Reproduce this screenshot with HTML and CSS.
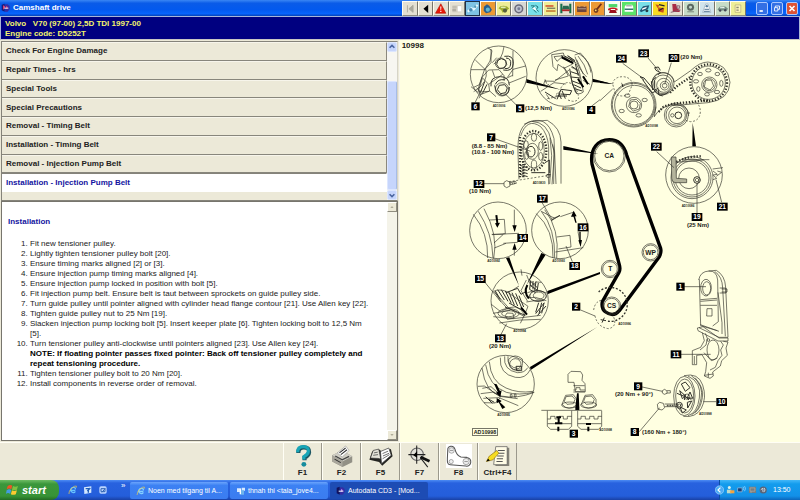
FILE: index.html
```html
<!DOCTYPE html>
<html lang="en">
<head>
<meta charset="utf-8">
<title>Camshaft drive</title>
<link rel="stylesheet" href="styles.css">
</head>
<body>
<header class="titlebar">
  <svg class="app-icon" viewBox="0 0 30 30"><path d="M2 5l9-3v24l-9-4z" fill="#181878"/><path d="M12 4h8l6 5v9l-6 8h-8z" fill="#342ca4"/><path d="M6 7l6 3v5l-6 5zM15 8l6 5-6 5z" fill="#d04078"/><path d="M10 14h12v3H10z" fill="#eef"/></svg>
  <h1>Camshaft drive</h1>
  <nav class="modules" aria-label="Modules">
    <button aria-label="First"><svg viewBox="0 0 46 42"><path d="M15 10v24M34 10L20 22l14 12z" fill="#aaa89c" stroke="#aaa89c" stroke-width="3"/></svg></button>
    <button aria-label="Back"><svg viewBox="0 0 46 42"><path d="M31 8L15 22l16 14z"/></svg></button>
    <button aria-label="Warnings"><svg viewBox="0 0 46 42"><path d="M23 5l17 32H5z" fill="#e81808" stroke="#b01000" stroke-width="2"/><path d="M21 14h4l-1 12h-2zM21 29h4v4h-4z" fill="#fff"/></svg></button>
    <button aria-label="Identification"><svg viewBox="0 0 46 42"><path d="M8 10h30v24H8z" fill="#d2cec2"/><path d="M26 13h12v18H26z" fill="#fff"/><path d="M8 14h14v4H8zm0 8h12v8H8z" fill="#b1ada2"/></svg></button>
    <button class="sky current" aria-label="Timing"><svg viewBox="0 0 46 42"><path d="M6 32l12-12 8 4 13-15" stroke="#e8f8ff" stroke-width="7" fill="none"/><circle cx="16" cy="25" r="6" fill="#4886b0"/><circle cx="31" cy="15" r="4" fill="#5898b8"/></svg></button>
    <button class="orange" aria-label="Engine"><svg viewBox="0 0 46 42"><path d="M10 15l10-8 8 5 9 13-6 9-14 3-8-8z" fill="#275d90"/><circle cx="23" cy="25" r="7" fill="#64b8d0"/></svg></button>
    <button class="lemon" aria-label="Car service"><svg viewBox="0 0 46 42"><path d="M5 20q8-12 29-6l7 7-5 4-17 10-5-9z" fill="#a1ae32"/><circle cx="27" cy="28" r="7" fill="#565f3c"/><path d="M15 14l15 1-2 5-16-1z" fill="#e1edb0"/></svg></button>
    <button class="pale" aria-label="Tyres"><svg viewBox="0 0 46 42"><circle cx="23" cy="22" r="13" fill="#c0c4d0" stroke="#6a6a7a" stroke-width="5"/><circle cx="23" cy="22" r="5" fill="#777d95"/></svg></button>
    <button class="cyan" aria-label="Cooling"><svg viewBox="0 0 46 42"><path d="M10 12h12l-8 8 14 15M25 10l9 6-6 8 8 7" stroke="#166770" stroke-width="3" fill="none"/><path d="M13 22l10-6 7 13z" fill="#fff"/></svg></button>
    <button class="lemon" aria-label="Lubricants"><svg viewBox="0 0 46 42"><path d="M5 10h27v5H5z" fill="#d04a2b"/><path d="M7 27h32v5H7z" fill="#c0702c"/><path d="M10 20h28" stroke="#444" stroke-width="3"/></svg></button>
    <button aria-label="Lifting points"><svg viewBox="0 0 46 42"><path d="M8 5v32M38 5v32" stroke="#176f49" stroke-width="7"/><path d="M14 12h18l4 12H10z" fill="#286950"/><path d="M10 24h26v6H10z" fill="#b12729"/></svg></button>
    <button class="orange" aria-label="Battery"><svg viewBox="0 0 46 42"><path d="M7 14h32v19H7z" fill="#6c453c"/><path d="M12 9h6v7h-6zm17 0h6v7h-6z" fill="#d89a54"/><path d="M9 22h28" stroke="#b8a798" stroke-width="3"/></svg></button>
    <button class="orange" aria-label="Service"><svg viewBox="0 0 46 42"><path d="M35 5L18 26" stroke="#722c1a" stroke-width="6"/><circle cx="17" cy="28" r="8" fill="#733e24"/><circle cx="16" cy="27" r="3" fill="#ffdf68"/></svg></button>
    <button class="white" aria-label="Diagnostics"><svg viewBox="0 0 46 42"><path d="M9 6h29v11H9z" fill="#4ed76b"/><path d="M7 22q16-8 32 0v5l-6 1-3-5H17l-3 5-7-1z" fill="#c71c27"/><path d="M14 26h18l5 10H10z" fill="#9a121d"/></svg></button>
    <button class="green" aria-label="Air conditioning"><svg viewBox="0 0 46 42"><path d="M9 15l5-7h20l4 7v17H9z" fill="#fff"/><path d="M9 21h29v5H9z" fill="#35746f"/><path d="M14 12h19" stroke="#333" stroke-width="2"/></svg></button>
    <button class="cyan" aria-label="Electrics"><svg viewBox="0 0 46 42"><path d="M6 29L17 13l21-3-4 13-24 11z" fill="#205875"/><path d="M15 20l15-5-3 6-14 5z" fill="#fff"/><circle cx="30" cy="29" r="5" fill="#253e46"/></svg></button>
    <button class="yellow" aria-label="Wiring"><svg viewBox="0 0 46 42"><path d="M8 7l13 3-5 10zM17 17l21 3-3 15-18-5z" fill="#c8501f"/><path d="M20 8l19 4M20 28l15-9" stroke="#22222a" stroke-width="4"/></svg></button>
    <button aria-label="Airbags"><svg viewBox="0 0 46 42"><path d="M11 6h13l4 16 8 3v8H13z" fill="#a92c45"/><path d="M6 34l33-8M27 12h9v8h-9z" stroke="#82586a" stroke-width="3" fill="none"/></svg></button>
    <button class="mint" aria-label="Brakes"><svg viewBox="0 0 46 42"><circle cx="22" cy="17" r="12" fill="#5a6860"/><circle cx="22" cy="17" r="5" fill="#c1d2c7"/><path d="M11 32h23" stroke="#889788" stroke-width="4"/></svg></button>
    <button class="ice" aria-label="Alignment"><svg viewBox="0 0 46 42"><path d="M19 6h8l10 28H9z" fill="#fff" stroke="#8aa1b0" stroke-width="2"/><circle cx="23" cy="13" r="4" fill="#537ca0"/><path d="M15 24h16M13 31h20" stroke="#728ea6" stroke-width="4"/></svg></button>
    <button class="mint" aria-label="Vehicles"><svg viewBox="0 0 46 42"><path d="M5 24l8-9 18-1 9 7-3 7H9z" fill="#728c81"/><path d="M14 17l13-1 4 4H13z" fill="#edf7f2"/><circle cx="14" cy="28" r="4" fill="#445"/><circle cx="31" cy="27" r="4" fill="#445"/></svg></button>
    <button class="lemon" aria-label="Notes"><svg viewBox="0 0 46 42"><path d="M14 9h19v25H14z" fill="#fff8bb" stroke="#aaa071" stroke-width="2"/><path d="M18 15h8v5h-8zm0 9h8v5h-8z" fill="#8b8872"/></svg></button>
  </nav>
  <div class="window-controls">
    <button aria-label="Minimize"><svg viewBox="0 0 12 12"><path d="M3 8h4v2H3z" fill="#fff"/></svg></button>
    <button aria-label="Restore"><svg viewBox="0 0 12 12"><path d="M4 5V3h5v4H7M3 5h4v4H3z" fill="none" stroke="#fff"/></svg></button>
    <button class="close" aria-label="Close"><svg viewBox="0 0 12 12"><path d="M3 3l6 6M9 3L3 9" stroke="#fff" stroke-width="2"/></svg></button>
  </div>
</header>
<section class="vehicle"><p>Volvo   V70 (97-00) 2,5D TDI 1997-00</p><p>Engine code: D5252T</p></section>

<main class="workspace">
  <div class="left">
    <section class="topics">
      <div class="topic-list">
        <button>Check For Engine Damage</button>
        <button>Repair Times - hrs</button>
        <button>Special Tools</button>
        <button>Special Precautions</button>
        <button>Removal - Timing Belt</button>
        <button>Installation - Timing Belt</button>
        <button>Removal - Injection Pump Belt</button>
        <button class="selected">Installation - Injection Pump Belt</button>
      </div>
      <div class="scroll blue">
        <button aria-label="Scroll up"><svg viewBox="0 0 10 10"><path d="M2 6l3-3 3 3" fill="none" stroke="#4a65a0" stroke-width="2"/></svg></button>
        <div class="track"><div class="thumb"></div></div>
        <button aria-label="Scroll down"><svg viewBox="0 0 10 10"><path d="M2 4l3 3 3-3" fill="none" stroke="#4a65a0" stroke-width="2"/></svg></button>
      </div>
    </section>
    <section class="procedure">
      <article>
        <h2>Installation</h2>
        <ol>
          <li>Fit new tensioner pulley.</li>
          <li>Lightly tighten tensioner pulley bolt [20].</li>
          <li>Ensure timing marks aligned [2] or [3].</li>
          <li>Ensure injection pump timing marks aligned [4].</li>
          <li>Ensure injection pump locked in position with bolt [5].</li>
          <li>Fit injection pump belt. Ensure belt is taut between sprockets on guide pulley side.</li>
          <li>Turn guide pulley until pointer aligned with cylinder head flange contour [21]. Use Allen key [22].</li>
          <li>Tighten guide pulley nut to 25 Nm [19].</li>
          <li>Slacken injection pump locking bolt [5]. Insert keeper plate [6]. Tighten locking bolt to 12,5 Nm<br>[5].</li>
          <li>Turn tensioner pulley anti-clockwise until pointers aligned [23]. Use Allen key [24].<br><b>NOTE: If floating pointer passes fixed pointer: Back off tensioner pulley completely and<br>repeat tensioning procedure.</b></li>
          <li>Tighten tensioner pulley bolt to 20 Nm [20].</li>
          <li>Install components in reverse order of removal.</li>
        </ol>
      </article>
      <div class="scroll grey">
        <button aria-label="Scroll up"><svg viewBox="0 0 10 10"><path d="M3 6l2-2 2 2z" fill="#999684"/></svg></button>
        <div class="track"></div>
        <button aria-label="Scroll down"><svg viewBox="0 0 10 10"><path d="M3 4l2 2 2-2z" fill="#999684"/></svg></button>
      </div>
    </section>
  </div>

  <figure class="diagram">
    <svg viewBox="0 0 1200 1206" preserveAspectRatio="xMinYMin meet" role="img" aria-label="Timing belt diagram 10998">
      <!-- upper left: pump locking details and sprocket -->
      <g transform="translate(0 -12)">
        <text class="fig-no" x="5" y="36">10998</text>
        <path class="solid" d="M379 129l104 32-104-21zM578 128l60 16-60-6zM490 330l85 19 20 5-105-13z"/>
        <circle cx="296" cy="115" r="85"/>
        <path d="M213 101h45q8 40-37 66M226 72l29 28 18-20V39M263 35l13 9-6 31-17 27-15 44-17 8M281 84q25-10 31-52M277 80l13-15M339 44l-1 77M377 90l-38 10-16 23M338 118l-28 13M246 124l20-22 31-1 15 18v12M246 124l20 21 3 20-28 11-6-19zM266 145l42-30M277 103l7 20M230 155l14 17-7 15M247 127l-12 39M213 152l20 16 35-2M377 121l-50 20M269 165l19 17"/>
        <path class="dense" d="M293 73l11-5 13 5 3 13-8 10-14 1-8-11zM313 61q28-5 27 21t-30 20M318 66q16 1 14 18t-18 13M273 151q-4-29 28-29 26 0 27 26M284 148q3 27 23 30 22-1 21-25M286 145q8-18 29-13M298 148l16-2 8 10-5 14-15 3-10-12zM254 137l-11 29M261 145l-14 28"/>
        <circle cx="302" cy="82" r="16"/><circle cx="306" cy="160" r="20"/>
        <path d="M226 198l18-36M314 172l36 36"/>
        <circle cx="493" cy="126" r="85"/>
        <path d="M455 56l35-5 4 13 20 5 4 15-26 13-18-12-3 19-12-12zM462 62l28-3-19 17zM490 92l15 28-40 12M434 135l30 1 43-34M440 143l-5-13M447 145l-8 4-8-4 4-12M524 57l17-6q28 27 32 59M534 60q22 26 29 55M525 62q12 40 35 61M505 60q27 16 34 51l11 57q-15 11-24 0l-14-45-20-29M514 94q19 5 25 28M422 166l40-26 35 4M530 71l20 44M449 190l-10-15M570 145l-21-12"/>
        <path class="dense" d="M483 59l38 23M494 60l32 19M502 59l23 15M526 83l9 36M509 98l8 46 13 29M515 91l20 13M512 107l24 8M514 123l27 3M517 135l24 9M521 146l22 10M523 158l24 7M467 180h34M476 170l8 19M486 164l10 24M471 190l12-30 32 4-5 12-29-2M435 168l32 20"/>
        <path class="thick" d="M485 64l34 17M549 121l15 24M534 128l16 26"/>
        <path class="dash" d="M482 157q14-25 32-14t22 43M468 175l17-12M504 192q25 10 32-6M442 188l40-8"/>
        <path d="M574 211l26-20"/>

        <path d="M354 353q-4-89 41-97 49 2 59 60l8 28-1 100M354 353l3 77M372 265q69-38 90 43l6 136M397 256l45-3q40 22 41 65v125M362 300q19-57 60-28 21 21 24 61v112M450 305l5 54-6 85M458 325l5 30-7 90"/>
        <ellipse cx="401" cy="344" rx="38" ry="59" class="teeth"/>
        <ellipse cx="401" cy="344" rx="32" ry="52"/><ellipse cx="397" cy="346" rx="18" ry="24"/><ellipse cx="393" cy="347" rx="12" ry="16" class="dense"/>
        <ellipse cx="402" cy="304" rx="8" ry="12"/><ellipse cx="378" cy="326" rx="7" ry="12"/><ellipse cx="422" cy="330" rx="6" ry="13"/><ellipse cx="380" cy="358" rx="6" ry="12"/><ellipse cx="422" cy="361" rx="6" ry="12"/><ellipse cx="402" cy="386" rx="8" ry="14"/>
        <path class="teeth" d="M360 303v125M370 375v51"/>
        <path class="dense" d="M360 388l23 7m-23 2l23 7m-23 2l23 7m-23 2l23 7M394 410h42M360 345l7-4M440 416h12M435 380l13-8v40"/>
        <circle cx="445" cy="420" r="5"/><path class="dash" d="M327 437l114-18"/>
        <path d="M284 308l108 38M252 443h60"/><path d="M312 439l8-5 9 4 1 12-10 5-8-5zM330 439l17-3 2 6-18 4zM335 437l3 8M341 436l3 8"/>
        <path d="M424 496l33 56M452 498"/>
      </g>
      <!-- injection pump belt and guide pulley -->
      <g transform="translate(600 -12)">
        <path class="solid" d="M0 135l39 9-39-3zM278 260l-1 71h11zM64 139l7 12-4 2z"/>
        <path class="dash" d="M38 144q3-22 32-22 27 3 26 26l-10 25q-18 14-40 0z"/>
        <path d="M0 194l38-35M68 82l57 42M144 66l32 38M214 80l-20 65"/>
        <circle cx="101" cy="206" r="67"/><circle cx="103" cy="207" r="59"/><circle cx="101" cy="206" r="64"/>
        <circle cx="102" cy="207" r="23"/><path d="M91 192l18-2 12 12-3 17-18 6-14-13z"/><circle cx="102" cy="207" r="12"/>
        <ellipse cx="82" cy="179" rx="8" ry="5"/><ellipse cx="134" cy="192" rx="8" ry="5"/><ellipse cx="65" cy="225" rx="8" ry="5"/><ellipse cx="116" cy="238" rx="8" ry="5"/>
        <circle cx="189" cy="143" r="33"/><circle cx="189" cy="145" r="28"/><circle cx="191" cy="148" r="21"/><circle cx="194" cy="149" r="13"/><circle cx="194" cy="149" r="7"/>
        <path class="dense" d="M160 158q17 34 46 10M168 124l-14 13 4 25M174 116l8-6-14-7-4-8 11-2 6 10M164 133v24M120 122l12 4 31 37 13-7M128 131l28 40 16-8M120 122l12 11M176 160v16l12 4"/>
        <path d="M155 143q5-38 40-33 24 5 28 28l49-34q27-26 52-26 60 3 66 61-2 53-66 61l-107 9M168 212l-5 30"/>
        <path class="teeth" d="M176 228l15-16 27-9 108-10M210 170l24-22 36-24"/>
        <circle cx="326" cy="140" r="50"/><circle cx="326" cy="140" r="55" class="teeth"/><circle cx="328" cy="146" r="23"/><circle cx="328" cy="146" r="18"/><path d="M317 133l17-1 7 18-11 12-17-9z"/>
        <ellipse cx="325" cy="103" rx="8" ry="5"/><ellipse cx="352" cy="114" rx="7" ry="5"/><ellipse cx="364" cy="142" rx="5" ry="9"/><ellipse cx="351" cy="168" rx="8" ry="5"/><ellipse cx="321" cy="175" rx="7" ry="5"/><ellipse cx="295" cy="159" rx="5" ry="7"/><ellipse cx="288" cy="136" rx="8" ry="5"/><ellipse cx="300" cy="114" rx="7" ry="5"/>
        <circle cx="229" cy="237" r="36"/><circle cx="229" cy="237" r="31"/><circle cx="231" cy="238" r="25"/><circle cx="235" cy="238" r="10" class="dense"/><circle cx="217" cy="238" r="5"/><path d="M162 243q20-36 66-38 38 3 38 35M261 231h9"/>
        <path class="dash" d="M256 204l33-6q12 12 12 30-2 28-30 29l-19-5"/>

        <circle cx="282" cy="417" r="85"/><circle cx="276" cy="425" r="63"/><circle cx="276" cy="426" r="57"/><circle cx="276" cy="426" r="51"/>
        <circle cx="267" cy="427" r="31"/><circle cx="291" cy="432" r="10" class="dense"/><circle cx="291" cy="432" r="5"/>
        <path class="key" d="M214 363h14l1 64 31 2v11h-35q-10-2-10-13z"/>
        <path d="M229 379l82-7M250 371h78M338 399l31-4M339 405l13 10-13 2M352 405l13 4-16 12M340 418l10 9-11 4"/>
        <path class="teeth" d="M229 378q39-19 76-17"/>
        <path d="M170 347l52 48M348 431l17 68M291 442v89"/>
      </g>
      <!-- timing belt run -->
      <path class="belt" d="M576 372C569 326 594 299 628 299 657 299 673 319 680 345L782 625Q785 637 778 650L658 812Q640 833 617 816 603 806 607 785L657 697Q662 688 658 674L605 478Z"/>
      <circle cx="628" cy="348" r="48"/><circle cx="628" cy="348" r="44"/>
      <circle cx="752" cy="637" r="26"/><circle cx="752" cy="637" r="22"/>
      <circle cx="630" cy="687" r="26"/><circle cx="630" cy="687" r="22"/>
      <circle cx="635" cy="798" r="27"/><circle cx="635" cy="798" r="23"/>
      <path class="dash heavy" d="M596 756a51 51 0 1 1 24 87"/><path class="dash" d="M581 810q4-28 28-30M585 827q7 35 41 39 26-6 15-35"/><path class="dense" d="M602 839l16 3M613 833l-7 15"/>
      <g class="pulley"><text x="628" y="355">CA</text><text x="752" y="644">WP</text><text x="631" y="694">T</text><text x="635" y="805">CS</text></g>

      <!-- timing mark magnifications -->
      <g transform="translate(0 570)">
        <path class="solid" d="M318 84l10-2 29 85zM380 165l57-91-13-5zM442 183l158-57v6l-158 61zM390 411l202-120-200 129z"/>
        <circle cx="294" cy="1" r="85"/><path d="M235-56q42 65 44 140M252-64q44 80 29 150M220-47q45 56 43 131M268-30l45-2 3 43-40 3M275 13l35 0-28 26M310 12l47-2M310 40l43-3M318 40l-35 14M343-61v50M343 77V50"/><path class="solid" d="M337-14h13l-6 20zM337 59h13l-6-20zM286-44l6-1 3 24 5-1-8 15-7-13 4-1z"/>
        <circle cx="480" cy="1" r="85"/><path d="M424-56l38 20 18-7M453-28l27-16-25 15 7-9M434-61q46 59 36 146M409-49q53 47 50 133M424-56q42 51 40 140M481-40l41-14M470 21l40-5 3 35-38 6M466 66l84-13M522-51v9M534 5l8 44"/><path class="solid" d="M513-40l8-18 9 17zM535 31l11-1-4 20zM519-45h5l6 23h-4zM538 5h4v30h-4z"/>
        <path d="M366 137l-3-19M498 48l19 47M254 156l49 60M302 315l18-34"/>
        <circle cx="359" cy="212" r="86"/>
        <path d="M281 184q14-8 38 0l65 45-12 30-45-24-15-17zM286 187l12 22 26 29M274 223l28 22q50-33 72 9l-13 26M279 250l51-9M280 260l60 6 82-10M298 279q60-12 124-11M380 135l13 33 16-12 15 1M379 150l-16 32 20 32M357 168l-19 12M380 204l26-2 33 10M382 188l30-8 28 9M379 216q24-6 54-4"/>
        <path class="dense" d="M286 183l15 25m-8-29l20 31m-9-31l20 35m-8-31l18 37m-8-35l17 40m-7-37l17 40m-6-38l17 41m-7-34l14 34M315 231l61 25M327 219l50 27M389 151l23 22m-22-7l21 14m-23-2l19 10M392 152l-3 25m10-24v25m9-24l-4 27m11-22l-4 26M407 251l26-33m-21 39l26-29m-22-10l-9 29m18-29l-8 33m15-32l-7 31M318 188l35-13 10 18 18-10"/>
        <path class="thick" d="M382 165q-12 23 5 40M363 232l18 22"/>
        <ellipse cx="326" cy="250" rx="32" ry="14"/><ellipse cx="326" cy="251" rx="21" ry="9"/><path d="M316 257l5-8 18 1 3 15-20 3z"/><ellipse cx="414" cy="198" rx="25" ry="16" class="dense"/><ellipse cx="416" cy="197" rx="16" ry="11"/>
        <circle cx="317" cy="462" r="86"/>
        <path d="M246 414q10 74 57 84t100-11M257 404q9 64 62 83 38 10 82 0M268 395q4 60 50 79 37 17 81 10M234 469l19-1 46 31 54 7M242 491l40-5 17 13M250 505l47-2 58 24M252 518l34 1 15-16M247 475l26-5 28 25M301 383q-4 49 45 59 31 5 44-22M314 379q-5 41 38 49 22 1 31-15M324 379q-5 33 32 37M326 388q18-20 41-1 3 30-12 35-33-5-29-34z"/>
        <circle cx="346" cy="403" r="17"/><path class="dense" d="M348 409h17v13h-15zM267 508l16 9M257 500l20 20"/>
        <path class="solid" d="M282 461l8 2 10 20 5-2-4 20-13-13 5-3zM316 532l-9 5-11-20-6 3v-16l15 9-5 4z"/>
        <path d="M331 493h5v9h-5zM343 492h5v9h-5z"/>
        <rect x="217" y="596" width="76" height="20"/><text class="plate" x="255" y="612">AD10998</text>

        <path d="M504 433l9-9 29 1 6 10-2 16 9 10 1 24h-30l-4-28H504z"/><path d="M520 467h34M520 480h8v-7h12v7h15M520 486h35"/>
        <path d="M486 523l11-27 23-2 10 14v17q-25 20-44-2zM544 523l11-27 23-2 10 14v17q-25 20-44-2z"/><ellipse cx="509" cy="525" rx="24" ry="9"/><ellipse cx="566" cy="525" rx="24" ry="9"/><path d="M493 514l5-14 18-2 9 10-5 13-19 2zM551 514l5-14 18-2 9 10-5 13-19 2z"/>
        <path class="solid" d="M531 490h5l2 42v8h-12v-8z"/>
        <path d="M424 541h181M442 542v47l10 9h53l10-9v-47M533 542v47l10 9h52l10-9v-47M442 567h10v-8h13v8h12v-8h13v8h12v-8h13M443 581h71M533 567h10v-8h13v8h13v-8h13v8h12v-8h11M533 581h71"/>
        <path class="thick" d="M476 562v18M469 562h14M465 580h22M475 590v14M565 590v14M558 582h15"/>
        <path d="M542 240l43 18"/>
      </g>
      <!-- covers, crankshaft pulley and bolts -->
      <g transform="translate(600 570)">
        <path d="M296 150q5-26 31-27 23-1 26 27l2 125-17 13M298 148l4 139 50 15M301 284l56 20M326 123l23-2q26 15 28 51l7 150h-27l-60-29M344 124q23 16 24 50l8 145M359 174h19v15h-19M365 177h16v9h-16M354 187l12 91v34M301 209l50-4M301 226h50M321 236h15v22h-16zM301 214l50-4M292 294l17-4 48 34h27v9h-30l-60-31z"/>
        <path d="M307 308L313 332 302 352 277 362V404H290V376L306 374 320 398 317 425 313 438 330 445 340 438 338 426 361 408 365 392 382 376 378 354 384 336 370 334M316 310L322 325 318 345 300 360M362 334L370 345 362 360 366 376 354 392 346 412 330 420M283 378v24M312 368l22 24 18-8M313 436l27-4M325 428v14"/>
        <ellipse cx="318" cy="173" rx="16" ry="25"/><ellipse cx="320" cy="175" rx="12" ry="20"/><ellipse cx="339" cy="360" rx="18" ry="30"/><circle cx="325" cy="330" r="4"/>
        <path d="M251 170h67M242 373h90M310 515h38M122 470l65 14M118 605l61-72"/>
        <ellipse cx="253" cy="498" rx="32" ry="59"/><ellipse cx="254" cy="498" rx="27" ry="51"/><path d="M252 437q43-10 56 28t-4 70q-17 29-54 24M264 438q42 20 34 66-6 45-34 53M274 437q39 28 29 69-6 37-28 48M285 443q28 31 22 60-5 33-22 45"/>
        <path class="dense" d="M244 462l12-6 14 17-14 11zM239 482l18 16-10 8zM270 486l8 19-16-2zM262 517l13-4-12 21zM240 531l19 9-12 9zM231 490l43 18M250 494l17 16M256 493l-3 17M240 529l4-6"/><circle cx="261" cy="500" r="8"/><circle cx="238" cy="526" r="9" class="dense"/><circle cx="238" cy="526" r="4"/>
        <path d="M187 482l7-4 7 5v7l-8 3-6-4zM201 482h10v7h-10M172 523l7-6 11 3 4 13-8 7-12-3zM194 522h38v8h-38"/><path class="dense" d="M202 524v5m5-5v5m5-5v5m5-5v5m5-5v5"/>
      </g>
      <g class="tag">
        <rect x="214" y="187" width="25" height="24"/><text x="226" y="206">6</text>
        <rect x="348" y="193" width="25" height="24"/><text x="360" y="212">5</text>
        <rect x="561" y="198" width="25" height="24"/><text x="573" y="217">4</text>
        <rect x="261" y="280" width="25" height="24"/><text x="273" y="299">7</text>
        <rect x="221" y="420" width="32" height="24"/><text x="237" y="439">12</text>
        <rect x="411" y="464" width="32" height="24"/><text x="427" y="483">17</text>
        <rect x="533" y="550" width="32" height="24"/><text x="549" y="569">16</text>
        <rect x="352" y="582" width="32" height="24"/><text x="368" y="601">14</text>
        <rect x="508" y="666" width="32" height="24"/><text x="524" y="685">18</text>
        <rect x="225" y="705" width="32" height="24"/><text x="241" y="724">15</text>
        <rect x="516" y="788" width="25" height="24"/><text x="528" y="807">2</text>
        <rect x="285" y="883" width="32" height="24"/><text x="301" y="902">13</text>
        <rect x="509" y="1169" width="25" height="24"/><text x="521" y="1188">3</text>
        <rect x="648" y="44" width="32" height="24"/><text x="664" y="63">24</text>
        <rect x="715" y="28" width="32" height="24"/><text x="731" y="47">23</text>
        <rect x="806" y="42" width="32" height="24"/><text x="822" y="61">20</text>
        <rect x="753" y="308" width="32" height="24"/><text x="769" y="327">22</text>
        <rect x="951" y="488" width="32" height="24"/><text x="967" y="507">21</text>
        <rect x="875" y="519" width="32" height="24"/><text x="891" y="538">19</text>
        <rect x="829" y="728" width="25" height="24"/><text x="841" y="747">1</text>
        <rect x="812" y="931" width="32" height="24"/><text x="828" y="950">11</text>
        <rect x="702" y="1027" width="25" height="24"/><text x="714" y="1046">9</text>
        <rect x="949" y="1074" width="32" height="24"/><text x="965" y="1093">10</text>
        <rect x="692" y="1164" width="25" height="24"/><text x="704" y="1183">8</text>
      </g>
      <g class="torque">
        <text x="375" y="210">(12,5 Nm)</text><text x="215" y="323">(8.8 - 85 Nm)</text><text x="215" y="342">(10.8 - 100 Nm)</text><text x="207" y="460">(10 Nm)</text>
        <text x="841" y="57">(20 Nm)</text><text x="861" y="561">(25 Nm)</text><text x="267" y="924">(20 Nm)</text><text x="645" y="1068">(20 Nm + 90°)</text><text x="726" y="1183">(160 Nm + 180°)</text>
      </g>
      <g class="note">
        <text x="278" y="200">AD10006</text><text x="486" y="211">AD10086</text><text x="398" y="432">AD10830</text><text x="736" y="260">AD10098</text><text x="845" y="500">AD10086</text><text x="262" y="667">AD10992</text><text x="457" y="667">AD10993</text><text x="340" y="877">AD10994</text><text x="292" y="1129">AD10995</text><text x="655" y="856">AD10996</text><text x="897" y="1126">AD10998</text><text x="598" y="1172">AD10998</text>
      </g>
    </svg>
  </figure>
</main>

<nav class="actions" aria-label="Actions">
  <button><svg viewBox="0 0 75 66"><path d="M24 24q0-16 16-16t15 14q-1 10-13 15v8" fill="none" stroke="#1c5562" stroke-width="12"/><path d="M22 22q0-16 16-16t15 14q-1 9-13 15v8" fill="none" stroke="#18a5b7" stroke-width="9"/><circle cx="40" cy="57" r="7" fill="#168c9e"/></svg>F1</button>
  <button><svg viewBox="0 0 75 66"><path d="M9 31l29-14 29 17v17L39 65 9 49z" fill="#929086"/><path d="M9 31l29-14 29 17-28 15z" fill="#d0cec5"/><path d="M9 31l30 18v15L9 49z" fill="#aaa79d"/><path d="M24 24l24-20 10 13-20 19z" fill="#fff" stroke="#555"/><path d="M30 24l18-14M34 29l18-14M16 42l18 10" stroke="#333" stroke-width="3"/><path d="M18 33l20 11 20-10" fill="none" stroke="#444" stroke-width="4"/></svg>F2</button>
  <button><svg viewBox="0 0 75 66"><path d="M4 44l8-24 20-6 9 7 25-8 5 21-30 27-9-11z" fill="#252522"/><path d="M7 39l8-22 16-4 6 29-8-2z" fill="#e5e4da" stroke="#333" stroke-width="2"/><path d="M36 20l24-10 7 21-28 24z" fill="#fff" stroke="#333" stroke-width="2"/><path d="M17 24l11-2m-13 9l14-2M42 26l16-7M43 33l18-8M42 41l20-12" stroke="#333" stroke-width="2"/></svg>F5</button>
  <button><svg viewBox="0 0 75 66"><circle cx="29" cy="28" r="18" fill="#ddd" fill-opacity=".6" stroke="#666" stroke-width="3"/><path d="M28 3v52M4 29h49M38 37l22 28" stroke="#222" stroke-width="3"/><path d="M39 36l26 12" stroke="#111" stroke-width="8"/><path d="M18 31l11-12v19z"/></svg>F7</button>
  <button><svg class="belt-icon" viewBox="0 0 75 66"><path d="M5 17C4 3 22 0 26 14q4 17 17 22l17 1c18 4 13 28-3 25l-45-4C1 57 4 46 5 17z" fill="none" stroke="#555" stroke-width="3"/><g fill="#eee" stroke="#888" stroke-width="2"><circle cx="16" cy="17" r="8"/><circle cx="58" cy="49" r="9"/><circle cx="15" cy="49" r="6"/></g><path d="M11 17h10M53 49h10" stroke="#777" stroke-width="2"/></svg>F8</button>
  <button><svg viewBox="0 0 75 66"><path d="M35 9h35v53H30z" fill="#858378"/><path d="M31 6h33v52H25z" fill="#fffce6" stroke="#555" stroke-width="2"/><path d="M37 17h20M36 25h20M35 33h19M34 41h18M33 49h18" stroke="#555" stroke-width="3"/><path d="M34 17L12 34 4 49l19-5 17-19z" fill="#f6dc21" stroke="#93751a" stroke-width="2"/><path d="M4 49l5-8 5 5z"/></svg>Ctrl+F4</button>
</nav>

<footer class="taskbar">
  <button class="start"><svg viewBox="0 0 34 32"><path d="M2 5q7-6 13-1l-3 10q-6-5-13 0z" fill="#ef5427"/><path d="M17 5q6 4 14 0l-3 10q-8 4-14 0z" fill="#7fc241"/><path d="M-1 17q7-6 13-1L9 27q-6-5-12 0z" fill="#439cdf"/><path d="M14 17q6 4 14 0l-3 11q-8 3-14 0z" fill="#fdca31"/></svg>start</button>
  <div class="quick">
    <button aria-label="Internet Explorer"><svg class="ie" viewBox="0 0 30 30"><path d="M22 16H8q1-9 8-9t6 6m0 6q-3 5-8 3-6-2-6-8" fill="none" stroke="#68c4ff" stroke-width="4"/><path d="M3 27Q2 14 19 4q9-4 6 4" fill="none" stroke="#f2cf4a" stroke-width="2"/></svg></button>
    <button aria-label="Mail"><svg viewBox="0 0 30 30"><path d="M3 7l22-3v19L4 27z" fill="#d3e7ff"/><path d="M8 11h8v12M13 18l9-9" stroke="#205db8" stroke-width="4" fill="none"/></svg></button>
    <button aria-label="Desktop"><svg viewBox="0 0 30 30"><rect x="4" y="4" width="22" height="22" rx="5" fill="#bad4ff"/><path d="M9 11h12v9H9zM12 22l10-12" stroke="#3265b5" stroke-width="3" fill="none"/></svg></button>
    <span>»</span>
  </div>
  <div class="tasks">
    <button><svg class="ie" viewBox="0 0 30 30"><path d="M22 16H8q1-9 8-9t6 6m0 6q-3 5-8 3-6-2-6-8" fill="none" stroke="#84d0ff" stroke-width="4"/><path d="M3 27Q2 14 19 4q9-4 6 4" fill="none" stroke="#f2cf4a" stroke-width="2"/></svg>Noen med tilgang til A...</button>
    <button><svg viewBox="0 0 30 30"><path d="M3 7h12v11H3zM17 5h10v9H17z" fill="#d8eaff"/><path d="M11 13h13v13H14z" fill="#6eb4ed"/><path d="M13 10v15" stroke="#fff" stroke-width="4"/></svg>thnah thi &lt;tala_jove4...</button>
    <button class="active"><svg viewBox="0 0 30 30"><path d="M2 5l9-3v24l-9-4z" fill="#12125e"/><path d="M12 4h8l6 5v9l-6 8h-8z" fill="#342ca4"/><path d="M15 8l6 5-6 5z" fill="#b57bf0"/><path d="M8 14h14v3H8z" fill="#fff"/></svg>Autodata CD3 - [Mod...</button>
  </div>
  <div class="tray">
    <button aria-label="Show hidden icons"><svg viewBox="0 0 30 30"><circle cx="15" cy="15" r="14" fill="#4cabf5" stroke="#a9ddff" stroke-width="2"/><path d="M18 7l-8 8 8 8" fill="none" stroke="#fff" stroke-width="4"/></svg></button>
    <svg viewBox="0 0 30 30"><circle cx="11" cy="7" r="5" fill="#dff2e9"/><path d="M3 26V14h15v12z" fill="#b7dbcd"/><path d="M14 16h14v10H14z" fill="#f4a43e"/></svg>
    <svg viewBox="0 0 30 30"><path d="M2 8h15v13H2z" fill="#183e79" stroke="#b6cee0" stroke-width="2"/><path d="M20 4q5 6 0 12M25 2q7 8 0 17" fill="none" stroke="#c8e5ff" stroke-width="2"/></svg>
    <svg viewBox="0 0 30 30"><path d="M3 4h24v21H3z" fill="#777d81"/><path d="M7 8h16v11H7zM10 25v-6" fill="none" stroke="#b8b3a8" stroke-width="2"/></svg>
    <svg viewBox="0 0 30 30"><circle cx="14" cy="15" r="12" fill="#596477"/><path d="M6 14l7-5v12M17 8q7 7-1 14" stroke="#d8dfe6" stroke-width="3" fill="none"/></svg>
    <time>13:50</time>
  </div>
</footer>
</body>
</html>
```
FILE: styles.css
```css
* { box-sizing: border-box; }
body {
  margin: 0;
  min-height: 100vh;
  display: flex;
  flex-direction: column;
  background: #ece9d8;
  color: #222;
  font: 8px/10px "Liberation Sans", Arial, sans-serif;
}
button { font: inherit; color: inherit; border: 0; padding: 0; margin: 0; background: none; }
svg { display: block; }
h1, h2, p, ol, figure { margin: 0; padding: 0; }

.titlebar {
  height: 16px;
  display: flex;
  align-items: center;
  background: linear-gradient(#3a86f4, #0a5be8 20%, #0359ee 60%, #0865fc 85%, #0442b8);
}
.app-icon { width: 10px; height: 10px; margin: 0 2px 0 1px; }
.titlebar h1 { flex: 1; color: #fff; font-size: 8px; line-height: 16px; }
.modules { display: grid; grid-template-columns: repeat(22, 1fr); width: 43%; height: 15px; margin-right: 10px; }
.modules button { background: #e4e0d2; border: 1px solid #fffcf0; border-right-color: #77756a; border-bottom-color: #8f8c80; overflow: hidden; }
.modules svg { width: 100%; height: 100%; }
.modules .sky { background: #7fc2e4; }
.modules .current { border-color: #203048; }
.modules .orange { background: #ec9a35; }
.modules .lemon { background: #eeee98; }
.modules .yellow { background: #f8dc24; }
.modules .cyan { background: #79e0e8; }
.modules .white { background: #f5fff2; }
.modules .green { background: #5ce36a; }
.modules .mint { background: #c7dcc8; }
.modules .ice { background: #d2e4ec; }
.modules .pale { background: #d7d8d4; }
.window-controls { display: flex; gap: 3px; padding-right: 2px; }
.window-controls button { width: 12px; height: 13px; border: 1px solid #a9c6ff; border-radius: 2px; background: #3470e4; }
.window-controls .close { background: #dd5335; }
.window-controls svg { width: 100%; height: 100%; }

.vehicle { height: 24px; padding: 2px 4px; border: 1px solid #a9b5d8; border-bottom-color: #c8c7c4; background: #000080; color: #f4f46c; font-weight: bold; white-space: pre; }

.workspace { flex: 1; display: grid; grid-template-columns: 1fr 1fr; min-height: 0; }
.left { display: flex; flex-direction: column; padding: 1px; border-right: 1px solid #f8f7ee; }
.topics { height: 160px; display: flex; border: 1px solid #85837a; border-right-color: #d6d4c8; }
.topic-list { flex: 1; display: grid; grid-template-rows: repeat(8, 1fr); padding-bottom: 8px; }
.topic-list button { text-align: left; padding-left: 4px; font-weight: bold; border-right: 1px solid #8b887d; border-bottom: 1px solid #88867c; border-top: 1px solid #f7f5eb; }
.topic-list .selected { background: #fff; color: #1414a0; border-color: #fff; border-top-color: #85837a; }
.scroll { width: 10px; display: flex; flex-direction: column; }
.scroll button { height: 10px; }
.scroll .track { flex: 1; }
.blue { background: #f7f6f1; }
.blue button, .thumb { background: #c6d5fc; border: 1px solid #dce6ff; border-radius: 2px; }
.blue .track { padding-top: 29px; }
.thumb { height: 100%; border-right-color: #a6bce8; }
.grey { background: #f4f3e9; }
.grey button { background: #ece9d8; border: 1px solid #fff; border-right-color: #8f8c80; border-bottom-color: #8f8c80; }
.procedure { flex: 1; display: flex; border: 1px solid #77756d; background: #fff; }
.procedure article { flex: 1; padding: 15px 0 0 6px; }
.procedure h2 { font-size: 8px; line-height: 10px; color: #1414a0; margin-bottom: 12px; }
.procedure ol { padding-left: 22px; }
.procedure li { white-space: nowrap; }
.procedure b { color: #000; }

.diagram { background: #ffffe1; min-width: 0; }
.diagram svg { width: 100%; height: auto; fill: none; stroke: #33332c; stroke-width: 2; }
.diagram text { stroke: none; fill: #1c1c16; font-family: "Liberation Sans", Arial, sans-serif; }
.diagram .solid { fill: #000; stroke: none; }
.diagram .dense { stroke-width: 3; }
.diagram .thick { stroke: #000; stroke-width: 6; }
.diagram .teeth { stroke-width: 7; stroke-dasharray: 4 5; }
.diagram .dash { stroke-dasharray: 6 5; }
.diagram .heavy { stroke-width: 4; }
.diagram .belt { stroke: #000; stroke-width: 10; stroke-linejoin: round; }
.diagram .key { fill: #b4b49c; }
.diagram .fig-no { font-size: 24px; font-weight: bold; }
.diagram .pulley text { font-size: 20px; font-weight: bold; text-anchor: middle; }
.tag rect { fill: #000; stroke: none; }
.diagram .tag text { fill: #fff; font-size: 20px; font-weight: bold; text-anchor: middle; }
.torque text { font-size: 18px; font-weight: bold; }
.note text { font-size: 9px; font-weight: bold; }
.diagram .plate { font-size: 16px; font-weight: bold; text-anchor: middle; }

.actions { height: 38px; display: flex; justify-content: center; border-top: 1px solid #fffef5; }
.actions button { width: 39px; display: flex; flex-direction: column; align-items: center; font-weight: bold; border-left: 1px solid #fffef5; border-right: 1px solid #9b988c; padding-top: 1px; }
.actions svg { width: 26px; height: 24px; }
.belt-icon { background: #fff; }

.taskbar { height: 20px; display: flex; color: #fff; background: linear-gradient(#4d8cf4, #2862df 15%, #245edb 80%, #1941a5); }
.start { width: 59px; display: flex; align-items: center; gap: 3px; padding-left: 7px; font: italic bold 11px/18px "Liberation Sans", Arial, sans-serif; border-radius: 0 8px 8px 0; background: linear-gradient(#6ebc64, #3b973b 20%, #379337 80%, #236b23); }
.start svg { width: 12px; height: 12px; overflow: visible; }
.quick { width: 71px; display: flex; align-items: center; gap: 5px; padding-left: 9px; }
.quick svg, .tasks svg { width: 10px; height: 10px; }
.quick span { margin: -8px 0 0 8px; }
.tasks { flex: 1; display: flex; gap: 2px; padding: 2px 0 1px; }
.tasks button { width: 98px; display: flex; align-items: center; gap: 2px; padding-left: 6px; font-size: 7px; white-space: nowrap; border-radius: 2px; background: linear-gradient(#6ba4fc, #3c81f3 20%, #3a7cf0); }
.tasks .active { background: #1d4cb4; }
.tray { width: 81px; display: flex; align-items: center; gap: 2px; background: linear-gradient(#43b7f8, #139ced 20%, #1290e8 80%, #0c66bb); border-left: 1px solid #0a4ea5; }
.tray svg { width: 9px; height: 10px; }
.tray button { margin-left: -5px; }
.tray time { margin-left: 3px; font-size: 7px; }
```
